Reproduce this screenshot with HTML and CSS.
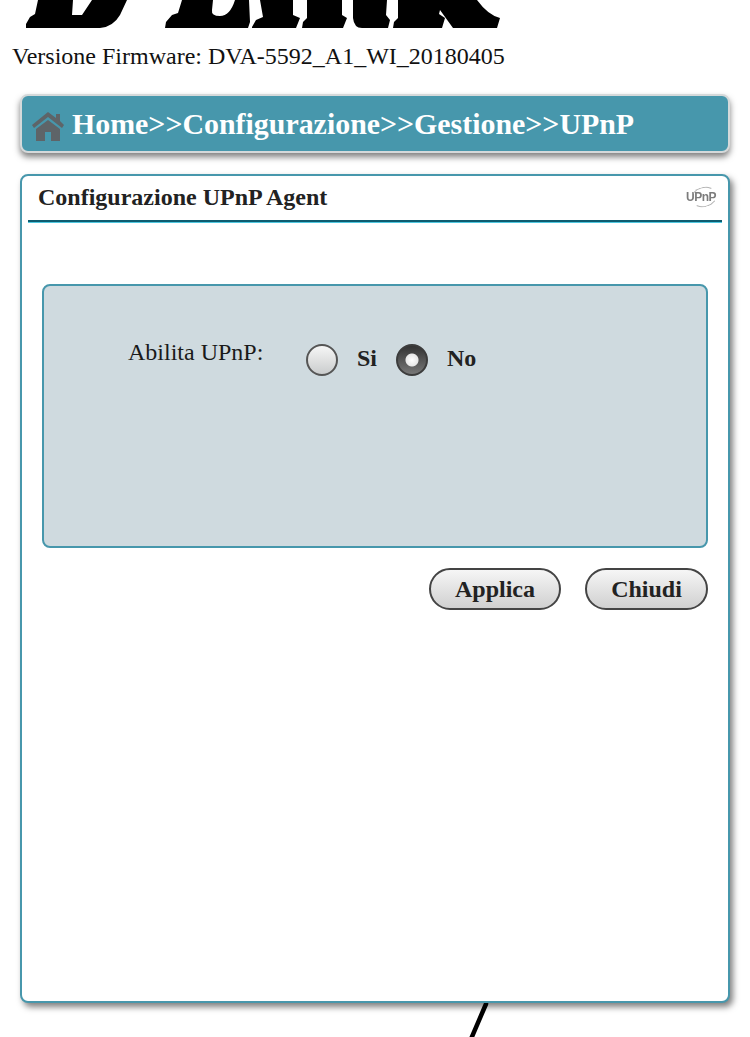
FILE: index.html
```html
<!DOCTYPE html>
<html lang="it">
<head>
  <meta charset="UTF-8">
  <title>UPnP</title>
  <link rel="stylesheet" href="styles.css">
</head>
<body>
  <svg class="logo" viewBox="0 0 510 30" width="510" height="30" aria-label="D-Link">
    <path d="M38 0 L35 14 L30 17 L26 24 L26 28 L100 28 Q113 27 120 15 L127 0 L92 0 L82 15 L72 15 L73 0 Z"/>
    <path d="M182 0 L178 13 L172 15 L166 22 L165 28 L248 28 L250 22 L249 0 L235 0 Q230 16 220 16 Q211 16 212 10 L213 0 Z"/>
    <path d="M260 0 L263 17 L256 20 L252 27 L252 28 L296 28 L300 18 L293 15 L293 0 Z"/>
    <path d="M307 0 L307 18 L303 22 L302 28 L343 28 L347 18 L342 15 L342 0 Z"/>
    <path d="M353 0 L353 18 Q354 28 362 28 L388 28 L390 20 L386 15 L387 0 Z"/>
    <path d="M398 0 L398 18 L394 22 L393 28 L442 28 L445 18 L439 14 L440 10 L453 28 L497 28 L500 18 Q488 15 477 0 Z"/>
  </svg>
  <p class="firmware">Versione Firmware: DVA-5592_A1_WI_20180405</p>

  <div class="path-bar">
    <svg class="home-icon" viewBox="0 0 32 29" width="32" height="29">
      <path d="M16 0 L24 6 L24 2 L28 2 L28 9 L32 13 L30 16 L16 5 L2 16 L0 13 Z"/>
      <path d="M16 8 L28 17 L28 29 L19 29 L19 20 L13 20 L13 29 L4 29 L4 17 Z"/>
    </svg>
    <span>Home&gt;&gt;Configurazione&gt;&gt;Gestione&gt;&gt;UPnP</span>
  </div>

  <div class="panel">
    <div class="panel-head">
      <h2>Configurazione UPnP Agent</h2>
      <span class="upnp-mark">UPnP</span>
    </div>

    <form class="settings">
      <div class="settings-box">
        <span class="field-label">Abilita UPnP:</span>
        <label class="radio"><input type="radio" name="upnp"><b>Si</b></label>
        <label class="radio"><input type="radio" name="upnp" checked><b>No</b></label>
      </div>
      <div class="buttons">
        <button type="button" class="btn-apply">Applica</button>
        <button type="button" class="btn-close">Chiudi</button>
      </div>
    </form>
  </div>

  <svg class="stray-line" viewBox="0 0 20 35" width="20" height="35">
    <path d="M17 1 L2 36" stroke="#000" stroke-width="4.5" stroke-linecap="round" fill="none"/>
  </svg>
</body>
</html>
```

FILE: styles.css
```css
html, body {
  margin: 0;
  padding: 0;
  background-color: white;
  font-family: "Liberation Serif", serif;
  overflow: hidden;
  height: 1037px;
}
.logo {
  display: block;
  fill: black;
  filter: blur(0.6px);
}
.firmware {
  margin: 12px 0 0 12px;
  font-size: 24px;
  line-height: 28px;
  color: #111;
}
.path-bar {
  display: flex;
  align-items: center;
  box-sizing: border-box;
  width: 710px;
  height: 59px;
  margin: 24px 0 0 20px;
  padding: 0 0 0 10px;
  gap: 8px;
  background-color: #4797ac;
  border: 2px solid #d5d9da;
  border-radius: 8px;
  box-shadow: 0 4px 6px #00000080;
  color: white;
  font-size: 29.9px;
  font-weight: bold;
}
.path-bar span {
  margin-top: 1px;
}
.home-icon {
  fill: #5e6468;
  margin-top: 6px;
}
.panel {
  box-sizing: border-box;
  width: 710px;
  height: 829px;
  margin: 21px 0 0 20px;
  padding: 0 6px;
  background-color: white;
  border: 2px solid #4797ac;
  border-radius: 8px;
  box-shadow: 3px 4px 6px #00000080;
}
.panel-head {
  display: flex;
  align-items: center;
  justify-content: space-between;
  height: 42px;
  padding: 0 6px 2px 10px;
  border-bottom: 2px solid #0d5c70;
  box-shadow: 0 1px 0 #4fc8e0;
}
.panel-head h2 {
  margin: 0;
  font-size: 24px;
  font-weight: bold;
  color: #222;
}
.upnp-mark {
  position: relative;
  font-family: "Liberation Sans", sans-serif;
  font-size: 12px;
  font-weight: bold;
  letter-spacing: -0.5px;
  color: #7c7c7c;
  filter: blur(0.6px);
}
.upnp-mark::before {
  content: "";
  position: absolute;
  left: 5px;
  top: -3px;
  width: 24px;
  height: 18px;
  border: 1px solid transparent;
  border-top-color: #b5b5b5;
  border-bottom-color: #b5b5b5;
  border-radius: 50%;
  transform: rotate(-15deg);
}
.settings {
  padding: 62px 14px 0 14px;
}
.settings-box {
  box-sizing: border-box;
  display: flex;
  align-items: flex-start;
  height: 264px;
  padding: 53px 0 0 84px;
  background-color: #cfdadf;
  border: 2px solid #4797ac;
  border-radius: 8px;
}
.field-label {
  width: 178px;
  font-size: 24px;
  line-height: 26px;
  color: #1a1a1a;
}
.radio {
  display: flex;
  align-items: center;
  height: 32px;
  margin: 5px 19px 0 0;
  font-size: 24px;
  color: #222;
}
.radio b {
  margin-top: -4px;
}
.radio input {
  appearance: none;
  box-sizing: border-box;
  width: 32px;
  height: 32px;
  margin: 0 19px 0 0;
  border: 2px solid #555;
  border-radius: 50%;
  background: linear-gradient(#f6f6f6, #cacccd);
}
.radio input:checked {
  background: radial-gradient(circle, #fff 0, #e8e8e8 6px, transparent 7px), linear-gradient(#333, #777);
  border-color: #3c3c3c;
}
.buttons {
  display: flex;
  justify-content: flex-end;
  gap: 24px;
  margin-top: 20px;
}
.buttons button {
  height: 42px;
  padding: 0;
  border: 2px solid #444;
  border-radius: 21px;
  background: linear-gradient(#f6f6f6, #d0d0d0);
  font-family: "Liberation Serif", serif;
  font-size: 24px;
  font-weight: bold;
  color: #222;
}
.btn-apply {
  width: 132px;
}
.btn-close {
  width: 123px;
}
.stray-line {
  display: block;
  margin-left: 469px;
}
```
